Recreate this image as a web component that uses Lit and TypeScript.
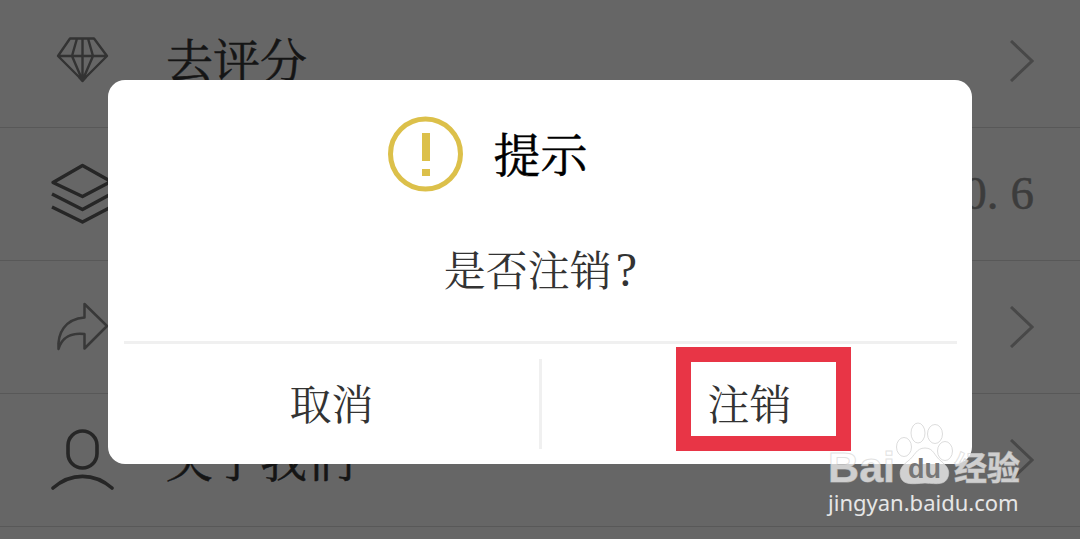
import { LitElement, html, svg, css } from "lit";
import { customElement, property } from "lit/decorators.js";

const icons: Record<string, unknown> = {
  diamond: svg`<g stroke-width="2.4" stroke="#333">
    <path d="M20 9.500H44L57 27L32.500 51.500L8 27Z M8 27H57 M27 9.500L22 27L32.500 51.500L43 27L38 9.500 M32.500 9.500V51.500"/>
    <path d="M29 48L32.500 52L36 48"/></g>`,
  layers: svg`<g stroke-width="3.400" stroke="#262626">
    <path d="M32.500 3.500L61 19.500L32.500 34.500L3 20.500Z"/>
    <path d="M2 32L32.500 47.500L61 32 M2 45L32.500 60L61 45"/></g>`,
  share: svg`<path stroke-width="2.500" stroke="#383838" d="M34.500 9L57 31L34.500 53.500V39C22 37.500 12 42 8.500 54C7.500 38 15 24 34.500 22.500Z"/>`,
  person: svg`<g stroke-width="3.600" stroke="#262626" stroke-linecap="round">
    <rect x="18" y="3" width="29" height="37" rx="14.500"/>
    <path d="M3 60C21 44.500 44 44.500 62 60"/></g>`,
};

@customElement("settings-row")
export class SettingsRow extends LitElement {
  @property() icon = "";
  @property() label = "";
  @property() value = "";

  static styles = css`
    :host {
      display: flex;
      align-items: center;
      gap: 52px;
      padding: 34px 46px 35px 50px;
      border-bottom: 1px solid #585858;
      font-size: 47px;
      line-height: 63px;
      color: #151515;
    }
    .icon { flex: none; width: 64px; height: 63px; fill: none; stroke-linejoin: round; }
    .label { flex: 1; white-space: nowrap; padding-bottom: 6px; line-height: 57px; -webkit-text-stroke: 0.5px; }
    .chevron { flex: none; width: 24px; height: 42px; fill: none; stroke: #484848; stroke-width: 3; }
    .value { color: #3c3c3c; font-family: "Liberation Serif", serif; -webkit-text-stroke: 0.5px; }
    .dot { padding-right: 12px; }
  `;

  render() {
    const [major, minor] = this.value.split(".");
    return html`
      <svg class="icon" viewBox="0 0 64 63" aria-hidden="true">${icons[this.icon]}</svg>
      <span class="label">${this.label}</span>
      ${this.value
        ? html`<span class="value">${major}<span class="dot">.</span>${minor}</span>`
        : html`<svg class="chevron" viewBox="0 0 24 42" aria-hidden="true"><path d="M1 1L22 21L1 41"/></svg>`}
    `;
  }
}

@customElement("confirm-dialog")
export class ConfirmDialog extends LitElement {
  static styles = css`
    :host {
      display: block;
      box-sizing: border-box;
      width: 80%;
      padding: 36px 15px 15px 16px;
      border-radius: 17px;
      background: #fff;
      color: #333;
      font-size: 42px;
      line-height: 60px;
    }
    header {
      display: grid;
      grid-template-columns: 1fr auto 1fr;
      align-items: center;
      gap: 30px;
    }
    .warn { justify-self: end; width: 76px; height: 76px; }
    h2 { margin: 0; padding-bottom: 4px; font-size: 47px; font-weight: 400; color: #000; -webkit-text-stroke: 0.5px; }
    p { margin: 0; padding: 46px 0 43px; text-align: center; }
    .mark { font-family: "Liberation Serif", serif; font-size: 48px; line-height: 48px; padding-left: 4px; }
    .actions {
      display: grid;
      grid-template-columns: 1fr 3px 1fr;
      border-top: 3px solid #f0f0f0;
      padding-top: 15px;
    }
    .divider { background: #f0f0f0; }
    .cell { position: relative; display: grid; }
    button {
      min-height: 90px;
      padding: 0 0 4px;
      border: 0;
      background: none;
      color: inherit;
      font: inherit;
    }
    .marker {
      position: absolute;
      top: -12px;
      left: 134px;
      box-sizing: border-box;
      width: 175px;
      height: 104px;
      border: 15px solid #e83546;
      pointer-events: none;
    }
  `;

  render() {
    return html`
      <header>
        <svg class="warn" viewBox="0 0 76 76" aria-hidden="true">
          <circle cx="37.500" cy="38" r="35" fill="none" stroke="#dcc04a" stroke-width="5"/>
          <path fill="#dcc04a" d="M34 17H42V45H34Z M34 53H42V60H34Z"/>
        </svg>
        <h2>提示</h2>
      </header>
      <p>是否注销<span class="mark">?</span></p>
      <div class="actions">
        <div class="cell"><button>取消</button></div>
        <div class="divider"></div>
        <div class="cell"><button>注销</button><span class="marker"></span></div>
      </div>
    `;
  }
}

@customElement("site-watermark")
export class SiteWatermark extends LitElement {
  static styles = css`
    :host {
      display: block;
      color: rgba(255, 255, 255, 0.7);
      font-family: "Liberation Sans", "Noto Sans CJK SC", sans-serif;
      white-space: nowrap;
    }
    .brand { display: flex; align-items: flex-end; height: 64px; font-weight: 700; -webkit-text-stroke: 1px rgba(205, 205, 205, 0.6); }
    .bai { font-size: 43px; line-height: 36px; }
    .paw { position: relative; flex: none; width: 59px; height: 64px; }
    .paw svg { display: block; width: 59px; height: 64px; fill: rgba(255, 255, 255, 0.7); stroke: rgba(205, 205, 205, 0.7); }
    .du { position: absolute; left: 0; right: 0; bottom: 2px; text-align: center; font-size: 27px; line-height: 28px; color: #777; -webkit-text-stroke: 0; }
    .jy { font-size: 33px; line-height: 32px; }
    .url { font-family: "Noto Sans", sans-serif; font-size: 22px; line-height: 30px; padding-top: 2px; color: #e6e6e6; }
  `;

  render() {
    return html`
      <div class="brand">
        <span class="bai">Bai</span>
        <span class="paw">
          <svg viewBox="0 0 59 64" aria-hidden="true">
            <ellipse cx="9" cy="26" rx="7.500" ry="9.500"/>
            <ellipse cx="23" cy="12" rx="7" ry="10"/>
            <ellipse cx="40" cy="13" rx="7.500" ry="9.500"/>
            <ellipse cx="50" cy="30" rx="7.500" ry="9.500"/>
            <path d="M30 27C21 27 20 35 13 40C5 46 4 51 6 57C9 64 17 63 30 62C43 63 50 64 53 56C55 50 53 46 46 40C39 35 39 27 30 27Z"/>
          </svg>
          <span class="du">du</span>
        </span>
        <span class="jy">经验</span>
      </div>
      <div class="url">jingyan.baidu.com</div>
    `;
  }
}

@customElement("app-root")
export class AppRoot extends LitElement {
  static styles = css`
    :host {
      display: block;
      position: relative;
      height: 100vh;
      overflow: hidden;
      background: #666;
      font-family: "Noto Serif CJK SC", "Source Han Serif SC", "Noto Sans CJK SC", serif;
    }
    .list { margin-top: -5px; }
    .overlay {
      position: absolute;
      inset: 0;
      display: grid;
      place-items: center;
      padding-top: 4px;
    }
    site-watermark { position: absolute; right: 60px; bottom: 22px; }
  `;

  render() {
    return html`
      <div class="list">
        <settings-row icon="diamond" label="去评分"></settings-row>
        <settings-row icon="layers" label="" value="0.6"></settings-row>
        <settings-row icon="share" label=""></settings-row>
        <settings-row icon="person" label="关于我们"></settings-row>
      </div>
      <div class="overlay"><confirm-dialog role="dialog" aria-label="提示"></confirm-dialog></div>
      <site-watermark></site-watermark>
    `;
  }
}
